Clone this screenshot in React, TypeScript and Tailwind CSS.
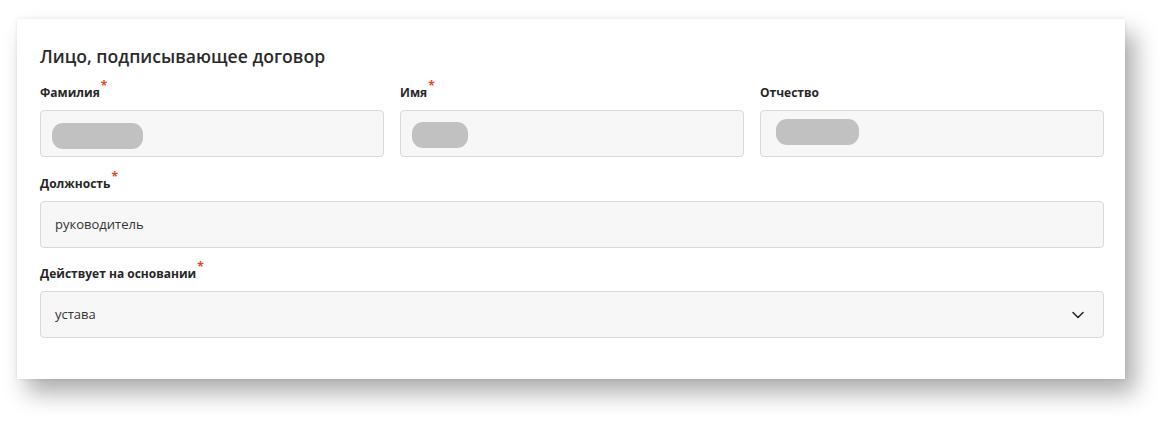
import React from 'react';
import { ChevronDown } from 'lucide-react';

const Req = () => <span className="relative -top-[7px] ml-[1px] text-[12px] font-bold leading-none text-[#e2461d]">*</span>;

const Blob: React.FC<{ w: string }> = ({ w }) => (
  <div className={`h-[26px] ${w} rounded-[11px] bg-[#c1c1c1]`} />
);

const Field: React.FC<{ label: string; required?: boolean; children: React.ReactNode }> = ({ label, required, children }) => (
  <div className="flex flex-col">
    <div className="h-[16px] text-[12px] font-bold leading-[16px] text-[#262626]">
      {label}
      {required && <Req />}
    </div>
    <div className="mt-[9px] flex h-[47px] items-center rounded-[4px] border border-[#dcd8d2] bg-[#f7f7f7] px-[14px] text-[13px] text-[#333]">
      {children}
    </div>
  </div>
);

const App: React.FC = () => {
  return (
    <div className="h-[428px] w-[1173px] bg-white pl-[17px] pt-[19px] font-['Open_Sans',sans-serif]">
      <div className="h-[360px] w-[1108px] bg-white px-[23px] pt-[25px] shadow-[0_0_4px_rgba(0,0,0,0.08),10px_14px_22px_rgba(0,0,0,0.32)]">
        <h2 className="text-[17.6px] font-semibold leading-[24px] text-[#2a2a2a]">Лицо, подписывающее договор</h2>

        <div className="mt-[17px] grid w-[1064px] grid-cols-3 gap-x-[16px]">
          <Field label="Фамилия" required>
            <div className="-ml-[3px] mt-[4px]"><Blob w="w-[91px]" /></div>
          </Field>
          <Field label="Имя" required>
            <div className="-ml-[3px] mt-[2px]"><Blob w="w-[56px]" /></div>
          </Field>
          <Field label="Отчество">
            <div className="-mt-[4px] ml-[1px]"><Blob w="w-[83px]" /></div>
          </Field>
        </div>

        <div className="mt-[19px] w-[1064px]">
          <Field label="Должность" required>
            руководитель
          </Field>
        </div>

        <div className="mt-[18px] w-[1064px]">
          <Field label="Действует на основании" required>
            <span className="flex-1">устава</span>
            <ChevronDown className="mr-[1px] h-[20px] w-[20px] text-[#222]" strokeWidth={1.8} />
          </Field>
        </div>
      </div>
    </div>
  );
};

export default App;
